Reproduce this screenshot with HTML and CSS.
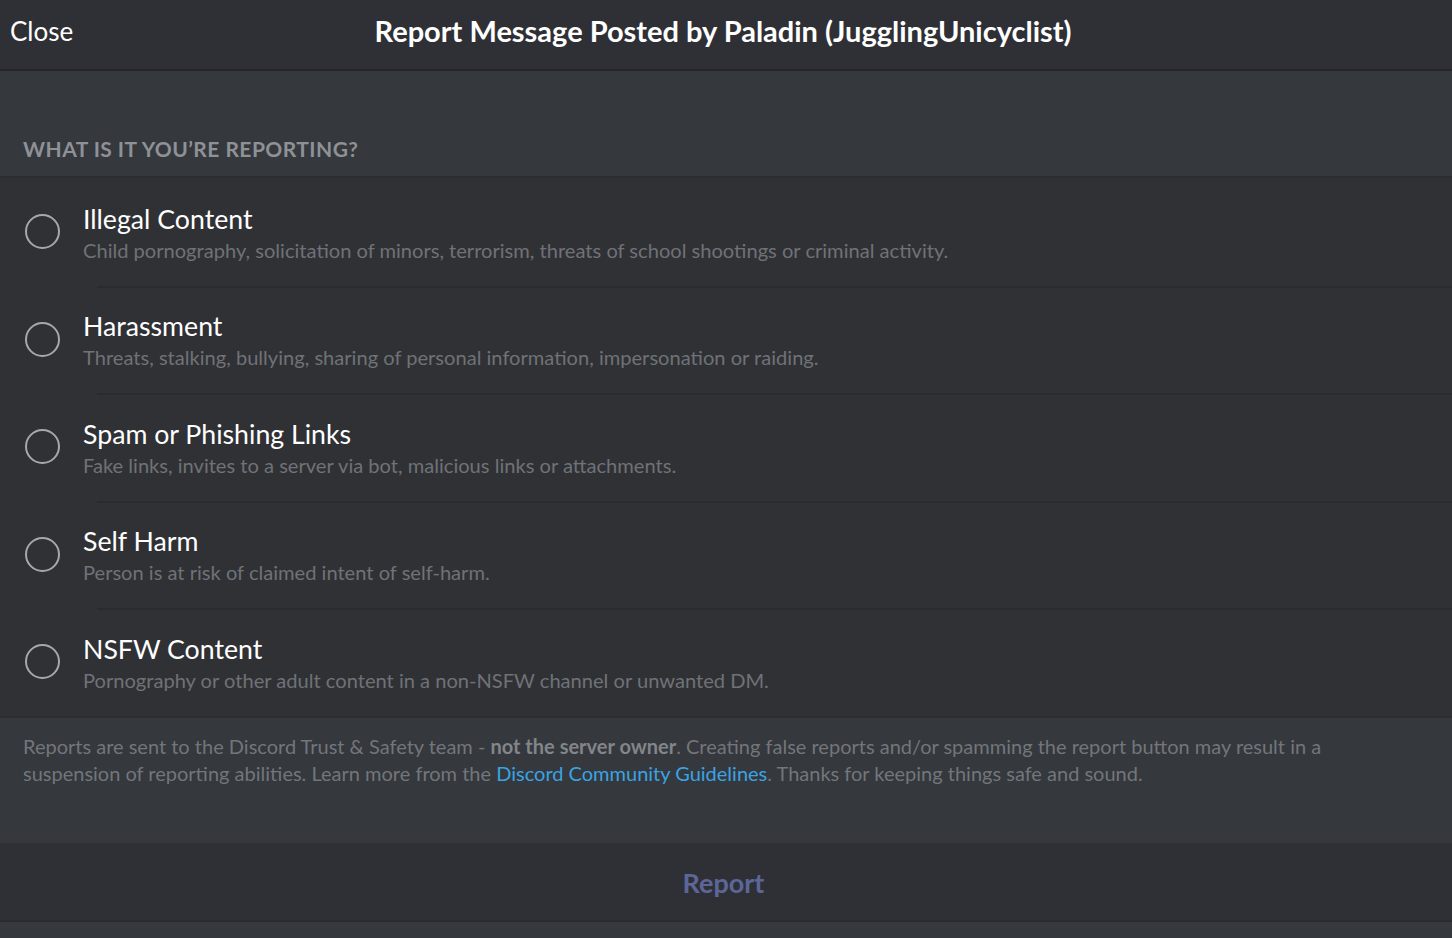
FILE: index.html
```html
<!DOCTYPE html>
<html>
<head>
<meta charset="utf-8">
<link rel="stylesheet" href="styles.css">
</head>
<body>
<div class="page">
  <header class="topbar">
    <span class="close">Close</span>
    <h1 class="title">Report Message Posted by Paladin (JugglingUnicyclist)</h1>
  </header>
  <div class="section-label">WHAT IS IT YOU’RE REPORTING?</div>
  <ul class="options">
    <li class="option">
      <span class="radio"></span>
      <div class="option-body">
        <div class="option-title">Illegal Content</div>
        <div class="option-desc">Child pornography, solicitation of minors, terrorism, threats of school shootings or criminal activity.</div>
      </div>
    </li>
    <li class="option">
      <span class="radio"></span>
      <div class="option-body">
        <div class="option-title">Harassment</div>
        <div class="option-desc">Threats, stalking, bullying, sharing of personal information, impersonation or raiding.</div>
      </div>
    </li>
    <li class="option">
      <span class="radio"></span>
      <div class="option-body">
        <div class="option-title">Spam or Phishing Links</div>
        <div class="option-desc">Fake links, invites to a server via bot, malicious links or attachments.</div>
      </div>
    </li>
    <li class="option">
      <span class="radio"></span>
      <div class="option-body">
        <div class="option-title">Self Harm</div>
        <div class="option-desc">Person is at risk of claimed intent of self-harm.</div>
      </div>
    </li>
    <li class="option">
      <span class="radio"></span>
      <div class="option-body">
        <div class="option-title">NSFW Content</div>
        <div class="option-desc">Pornography or other adult content in a non-NSFW channel or unwanted DM.</div>
      </div>
    </li>
  </ul>
  <div class="notice">
    Reports are sent to the Discord Trust &amp; Safety team - <strong>not the server owner</strong>. Creating false reports and/or spamming the report button may result in a suspension of reporting abilities. Learn more from the <a class="link" href="#">Discord Community Guidelines</a>. Thanks for keeping things safe and sound.
  </div>
  <div class="actions">
    <button class="report-btn">Report</button>
  </div>
  <div class="bottom-strip"></div>
</div>
</body>
</html>
```

FILE: styles.css
```css
* { box-sizing: border-box; }
html, body {
  margin: 0;
  padding: 0;
  background: #36393e;
}
body {
  font-family: Lato, "Open Sans", sans-serif;
  width: 1452px;
  height: 938px;
  overflow: hidden;
}
.page {
  display: flex;
  flex-direction: column;
}
.topbar {
  height: 71px;
  background: #2f3035;
  border-bottom: 2px solid #25262a;
  display: flex;
  align-items: center;
  justify-content: center;
  padding-bottom: 8px;
  position: relative;
}
.close {
  position: absolute;
  left: 10px;
  top: 15px;
  font-size: 26px;
  color: #ffffff;
}
.title {
  margin: 0;
  font-size: 29px;
  font-weight: 700;
  color: #ffffff;
  margin-left: -6px;
}
.section-label {
  height: 107px;
  display: flex;
  align-items: flex-end;
  padding: 0 0 15px 23px;
  font-size: 21px;
  letter-spacing: 0.45px;
  font-weight: 700;
  color: #8e9196;
  background: #35383d;
  border-bottom: 2px solid #2c2d31;
}
.options {
  list-style: none;
  margin: 0;
  padding: 0;
  background: #303135;
}
.option {
  height: 107.5px;
  display: flex;
  align-items: center;
  padding-left: 25px;
  position: relative;
}
.option + .option::before {
  content: "";
  position: absolute;
  left: 97px;
  right: 0;
  top: 0;
  height: 2px;
  background: #2a2b2f;
}
.radio {
  width: 35px;
  height: 35px;
  border: 2px solid #a6a8ab;
  border-radius: 50%;
  flex: none;
}
.option-body {
  margin-left: 23px;
  margin-top: 2px;
}
.option-title {
  font-size: 26.7px;
  color: #ffffff;
  line-height: 34px;
}
.option-desc {
  font-size: 20.1px;
  color: #6f7277;
  line-height: 28px;
}
.notice {
  height: 127px;
  background: #35383d;
  border-top: 2px solid #2c2d31;
  padding: 15px 100px 0 23px;
  font-size: 20px;
  line-height: 27px;
  color: #72767b;
}
.notice strong {
  font-weight: 700;
  color: #82858a;
}
.link {
  color: #3aa3e3;
  text-decoration: none;
}
.actions {
  height: 79px;
  background: #2f3035;
  display: flex;
  align-items: center;
  justify-content: center;
  padding-top: 3px;
  border-bottom: 2px solid #2a2b2f;
}
.report-btn {
  background: none;
  border: none;
  font-family: inherit;
  font-size: 27px;
  font-weight: 700;
  color: #5d6699;
  padding: 0;
  margin-left: -5px;
}
.bottom-strip {
  height: 16px;
  background: #35383d;
}
```
